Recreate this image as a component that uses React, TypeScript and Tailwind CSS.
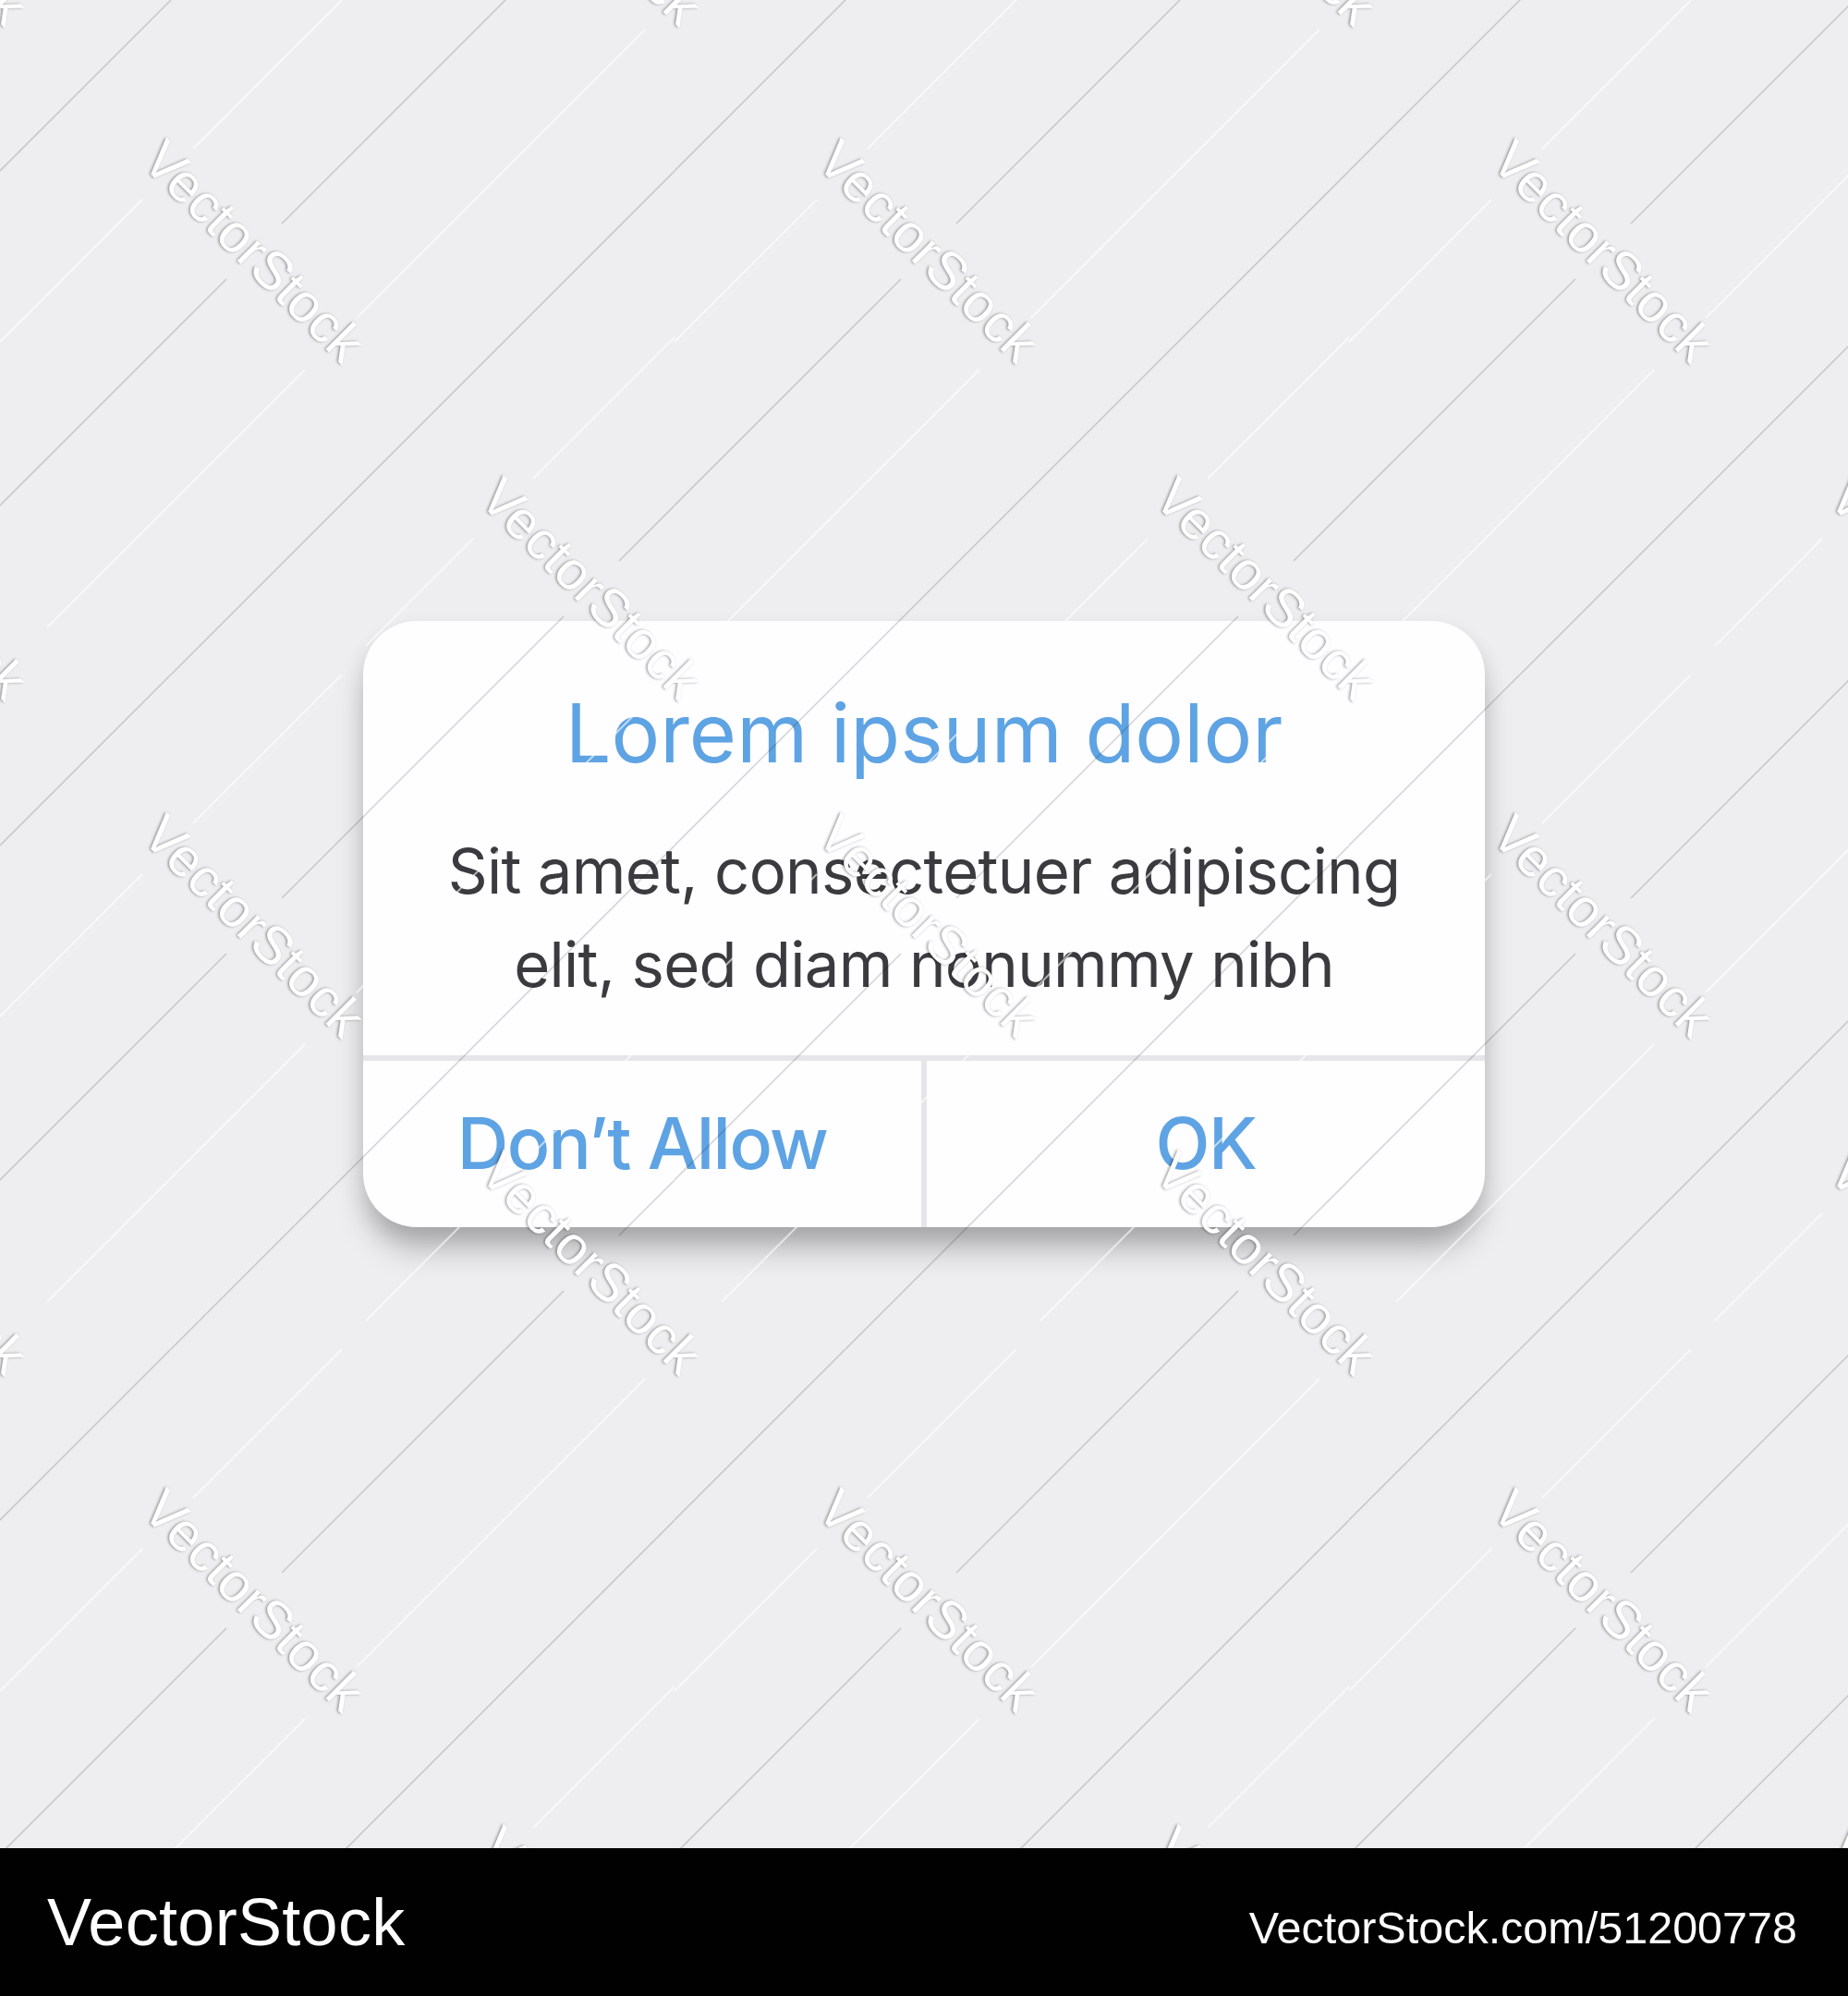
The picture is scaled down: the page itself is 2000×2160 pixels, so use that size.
import React from 'react';

// watermark lattice: repeats every 730px, with a second mark offset by half a tile
const TILE = 730;

const marks: { x: number; y: number }[] = [];
for (let j = -1; j <= 3; j++) {
  for (let i = -1; i <= 3; i++) {
    marks.push({ x: 275 + TILE * i, y: 272 + TILE * j });
    marks.push({ x: 640 + TILE * i, y: 637 + TILE * j });
  }
}
const visibleMarks = marks.filter(m => m.x > -300 && m.x < 2300 && m.y > -300 && m.y < 2300);

// dark diagonal segments inside one tile
const darkLines: [number, number, number, number][] = [
  [0, 185, 185, 0],
  [185, 730, 730, 185],
  [0, 547, 245, 302],
  [305, 242, 547, 0],
  [547, 730, 610, 667],
  [670, 607, 730, 547],
];

// faint, almost white segments
const faintLines: [number, number, number, number][] = [
  [0, 370, 154, 216],
  [209, 161, 370, 0],
  [386, 344, 698, 32],
  [51, 679, 330, 400],
  [577, 518, 730, 365],
  [396, 699, 512, 583],
];

const Watermark: React.FC = () => (
  <div className="pointer-events-none absolute inset-0 z-10">
    <svg width="2000" height="2000" className="absolute left-0 top-0">
      <defs>
        <pattern id="diag" patternUnits="userSpaceOnUse" width={TILE} height={TILE}>
          {faintLines.map((l, k) => (
            <line key={'f' + k} x1={l[0]} y1={l[1]} x2={l[2]} y2={l[3]} stroke="rgba(255,255,255,0.6)" strokeWidth="2" />
          ))}
          {darkLines.map((l, k) => (
            <line key={'d' + k} x1={l[0]} y1={l[1]} x2={l[2]} y2={l[3]} stroke="rgba(0,0,0,0.16)" strokeWidth="1.6" />
          ))}
        </pattern>
      </defs>
      <rect width="2000" height="2000" fill="url(#diag)" />
    </svg>
    {visibleMarks.map((m, k) => (
      <div
        key={k}
        className="absolute whitespace-nowrap font-['Liberation_Sans',Arial,sans-serif] text-[58px] leading-none text-white [text-shadow:-1px_1px_3px_rgba(0,0,0,0.38)]"
        style={{ left: m.x, top: m.y, transform: 'translate(-50%, -50%) rotate(45deg)' }}
      >
        VectorStock
      </div>
    ))}
  </div>
);

export default function App() {
  return (
    <div className="w-[2000px] h-[2160px] flex flex-col font-['Inter',sans-serif]">
      <div className="relative h-[2000px] overflow-hidden bg-[#eeedf0] flex items-center justify-center">
        <div className="w-[1214px] rounded-[58px] bg-[#fefdff] overflow-hidden shadow-[0_28px_34px_-6px_rgba(0,0,0,0.26),0_10px_24px_rgba(0,0,0,0.09)]">
          <div className="flex flex-col items-center pt-[71px] pb-[48px] border-b-[6px] border-[#e6e5ea]">
            <h1 className="text-[88px] leading-[100px] font-normal text-[#5ea3e3]">Lorem ipsum dolor</h1>
            <p className="mt-[49px] text-center text-[67px] leading-[101px] tracking-[-0.7px] text-[#3b3a3e]">
              Sit amet, consectetuer adipiscing
              <br />
              elit, sed diam nonummy nibh
            </p>
          </div>
          <div className="grid grid-cols-[1fr_6px_1fr] h-[180px]">
            <button className="flex items-center justify-center text-[77px] font-medium tracking-[-1.6px] text-[#5ea3e3]">Don’t Allow</button>
            <div className="bg-[#e6e5ea]" />
            <button className="flex items-center justify-center text-[77px] font-medium tracking-[-1.6px] text-[#5ea3e3]">OK</button>
          </div>
        </div>
        <Watermark />
      </div>
      <div className="relative z-20 h-[160px] bg-[#020102] flex items-center justify-between pl-[51px] pr-[55px] font-['Liberation_Sans',Arial,sans-serif] text-white">
        <span className="text-[72px] leading-none tracking-[0.3px]">VectorStock</span>
        <span className="pt-[12px] text-[48.5px] leading-none">VectorStock.com/51200778</span>
      </div>
    </div>
  );
}
